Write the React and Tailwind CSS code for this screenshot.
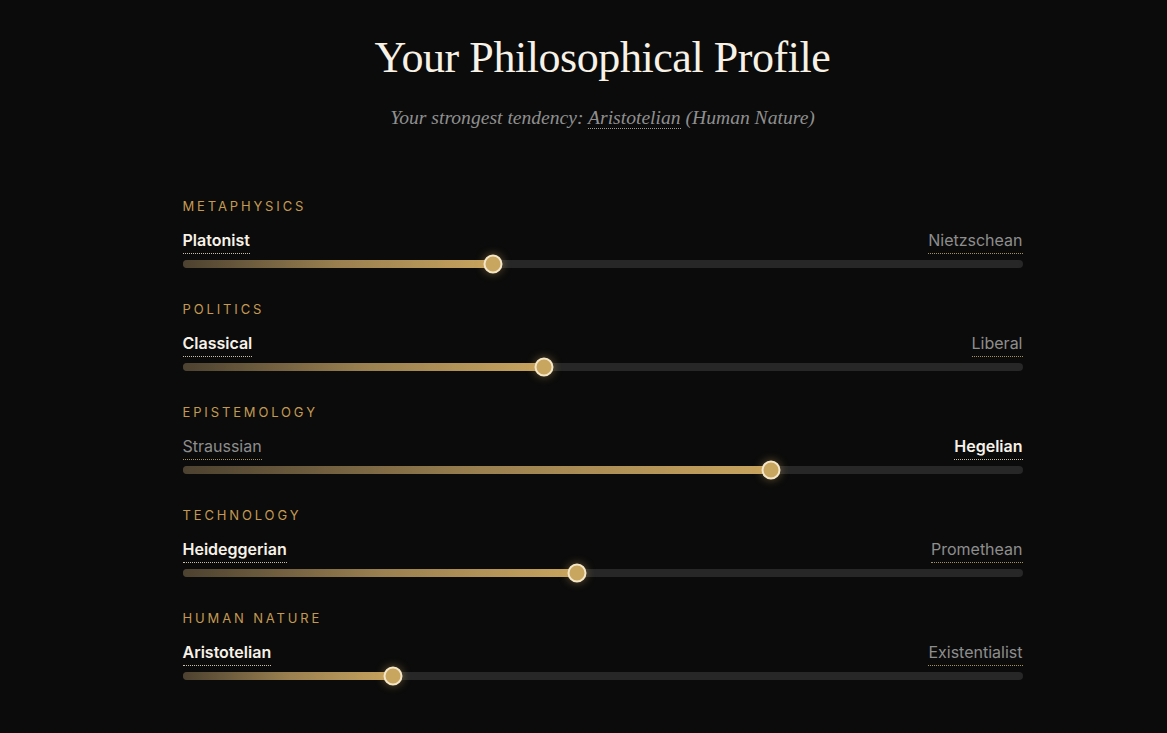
import { memo } from 'react';

const AXES = [
  { label: 'Metaphysics', left: 'Platonist', right: 'Nietzschean', value: 37 },
  { label: 'Politics', left: 'Classical', right: 'Liberal', value: 43 },
  { label: 'Epistemology', left: 'Straussian', right: 'Hegelian', value: 70 },
  { label: 'Technology', left: 'Heideggerian', right: 'Promethean', value: 47 },
  { label: 'Human Nature', left: 'Aristotelian', right: 'Existentialist', value: 25 },
];

const Pole = ({ name, active }) => (
  <span
    className={`inline-block border-b border-dotted pb-[1px] leading-[24px] ${
      active
        ? 'text-[#f7f2e8] font-semibold border-[#c8bfa8]'
        : 'text-[#8e8e8e] font-normal border-[#a48f62]'
    }`}
  >
    {name}
  </span>
);

const Axis = memo(function Axis({ axis }) {
  const leansLeft = axis.value < 50;
  return (
    <div className="flex flex-col">
      {/* Axis title */}
      <div className="text-[13px] leading-[20px] tracking-[0.22em] uppercase text-[#c49a52]">
        {axis.label}
      </div>

      {/* Poles */}
      <div className="mt-[12px] flex items-end justify-between text-[16px]">
        <Pole name={axis.left} active={leansLeft} />
        <Pole name={axis.right} active={!leansLeft} />
      </div>

      {/* Track */}
      <div className="relative mt-[6px] h-2 rounded-full bg-[#272727]">
        <div
          className="h-full rounded-full bg-gradient-to-r from-[#4d4230] via-[#9a8050] to-[#c8a45e]"
          style={{ width: `${axis.value}%` }}
        />
        <div
          className="absolute top-1/2 w-[19px] h-[19px] -translate-x-1/2 -translate-y-1/2 rounded-full border-2 border-[#f4e6c6] bg-[#c9a660] shadow-[0_0_10px_rgba(214,176,98,0.45)]"
          style={{ left: `${axis.value}%` }}
        />
      </div>
    </div>
  );
});

export default function App() {
  return (
    <div
      className="min-h-[733px] bg-[#0b0b0b] pl-[38px] pt-[32px] pb-10"
      style={{ fontFamily: 'Inter, "Liberation Sans", sans-serif' }}
    >
      <div className="mx-auto max-w-[840px]">
        <header className="text-center" style={{ fontFamily: '"Liberation Serif", "DejaVu Serif", serif' }}>
          <h1 className="text-[44px] leading-[52px] text-[#f7f1e6] tracking-[-0.01em]">
            Your Philosophical Profile
          </h1>
          <p className="mt-[20px] text-[19.6px] leading-[28px] italic text-[#8f8f8f]">
            Your strongest tendency:{' '}
            <span className="border-b border-dotted border-[#a09a90]">Aristotelian</span> (Human Nature)
          </p>
        </header>

        <div className="mt-[64px] flex flex-col gap-[31px]">
          {AXES.map((axis) => (
            <Axis key={axis.label} axis={axis} />
          ))}
        </div>
      </div>
    </div>
  );
}
